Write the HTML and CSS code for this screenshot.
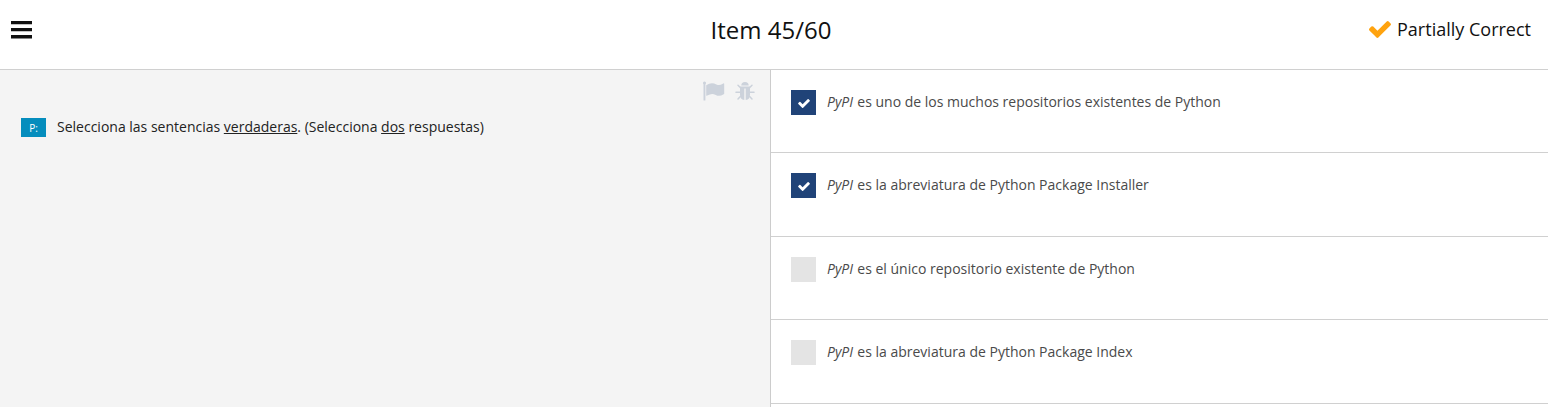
FILE: index.html
```html
<!DOCTYPE html>
<html lang="es">
<head>
<meta charset="utf-8">
<title>Item 45/60</title>
<link rel="stylesheet" href="styles.css">
</head>
<body>
<header class="topbar">
  <svg class="menu" viewBox="0 0 22 18"><path d="M1 0h21v3.300H1zM1 7h21v3.300H1zM1 14h21v3.500H1z"/></svg>
  <h1 class="title">Item 45/60</h1>
  <div class="status">
    <svg class="status-icon" viewBox="0 0 1550 1188"><path d="M1550 232q0 40-28 68l-724 724-136 136q-28 28-68 28t-68-28L390 1024 28 662Q0 634 0 594t28-68l136-136q28-28 68-28t68 28l294 295L1250 28q28-28 68-28t68 28l136 136q28 28 28 68z"/></svg>
    <span>Partially Correct</span>
  </div>
</header>
<main class="content">
  <section class="question">
    <div class="tools">
      <svg class="flag" viewBox="0 0 22 20"><path d="M0 2a1.500 1.500 0 1 1 2.400 1.200V19q0 .6-.6.6h-.7q-.6 0-.6-.6V3.200Q0 2.800 0 2z"/><path d="M3.200 4.200Q6.200 2.200 9 2.200q2 0 4.400 1.300 1.300.6 2.400.6 1.800 0 4.500-1.700.9-.3.900.5v9.600q0 .5-.5.8-2.700 1.500-4.700 1.500-1.500 0-3.200-.9-2-1-3.600-1-2.200 0-4.900 1.700-.9.500-1.100-.4V5q0-.5.100-.8z"/></svg>
      <svg class="bug" viewBox="0 0 20 20"><path d="M6.300 4.500a3.700 3.500 0 0 1 7.400 0zM5 5.600h10v7.900q0 5-4.300 5.500V7.500H9.300V19Q5 18.500 5 13.500z"/><path class="legs" d="M5.500 6.700 3 4.300M14.500 6.700 17 4.300M5 11.300H1M15 11.300h4M5.600 15.300 3 18M14.400 15.300 17 18"/></svg>
    </div>
    <div class="prompt">
      <span class="tag">P:</span>
      <p>Selecciona las sentencias <u>verdaderas</u>. (Selecciona <u>dos</u> respuestas)</p>
    </div>
  </section>
  <section class="answers">
    <div class="answer"><span class="box checked"><svg viewBox="0 0 1550 1188"><path d="M1550 232q0 40-28 68l-724 724-136 136q-28 28-68 28t-68-28L390 1024 28 662Q0 634 0 594t28-68l136-136q28-28 68-28t68 28l294 295L1250 28q28-28 68-28t68 28l136 136q28 28 28 68z"/></svg></span><p><em>PyPI</em> es uno de los muchos repositorios existentes de Python</p></div>
    <div class="answer"><span class="box checked"><svg viewBox="0 0 1550 1188"><path d="M1550 232q0 40-28 68l-724 724-136 136q-28 28-68 28t-68-28L390 1024 28 662Q0 634 0 594t28-68l136-136q28-28 68-28t68 28l294 295L1250 28q28-28 68-28t68 28l136 136q28 28 28 68z"/></svg></span><p><em>PyPI</em> es la abreviatura de Python Package Installer</p></div>
    <div class="answer"><span class="box"></span><p><em>PyPI</em> es el único repositorio existente de Python</p></div>
    <div class="answer"><span class="box"></span><p><em>PyPI</em> es la abreviatura de Python Package Index</p></div>
  </section>
</main>
</body>
</html>
```
FILE: styles.css
```css
* { box-sizing: border-box; }
body { margin: 0; height: 407px; overflow: hidden; background: #fff; font: 14px/20px "Open Sans", sans-serif; color: #222; display: flex; flex-direction: column; }
p, h1 { margin: 0; font-weight: 400; }
.topbar { height: 70px; flex: none; border-bottom: 1px solid #d0d0d0; display: grid; grid-template-columns: 1fr auto 1fr; padding: 0 17px 9px 10px; align-items: center; }
.menu { width: 22px; height: 18px; fill: #111; }
.title { font-size: 24px; line-height: 32px; color: #111; padding-left: 1px; }
.status { display: flex; align-items: center; justify-content: flex-end; gap: 6px; font-size: 18px; line-height: 24px; color: #111; padding-bottom: 2px; }
.status-icon { width: 22px; height: 17px; fill: #ffa30f; }
.content { flex: 1; display: flex; min-height: 0; }
.question { width: 771px; flex: none; background: #f4f4f4; border-right: 1px solid #ccc; padding: 11px 15px 0 21px; }
.tools { display: flex; justify-content: flex-end; gap: 10px; height: 20px; fill: #ccd2db; }
.flag { width: 22px; height: 20px; }
.bug { width: 20px; height: 20px; }
.legs { fill: none; stroke: #ccd2db; stroke-width: 1.5; stroke-linecap: round; }
.prompt { display: flex; gap: 11px; margin-top: 16px; }
.tag { width: 25px; height: 19px; margin-top: 1px; background: #058dbd; color: #fff; font-size: 10px; line-height: 20px; text-align: center; }
.answers { flex: 1; }
.answer { height: 83.4px; border-bottom: 1px solid #d0d0d0; display: flex; gap: 11px; padding: 20px 20px 0; color: #4a4a4a; }
.answer p { padding-top: 2px; }
.answer em { margin-right: 0.6px; }
.box { width: 25px; height: 25px; background: #e4e4e4; display: grid; place-items: center; }
.checked { background: #204378; }
.box svg { width: 12px; height: 9px; fill: #fff; margin-top: 1px; }
```
